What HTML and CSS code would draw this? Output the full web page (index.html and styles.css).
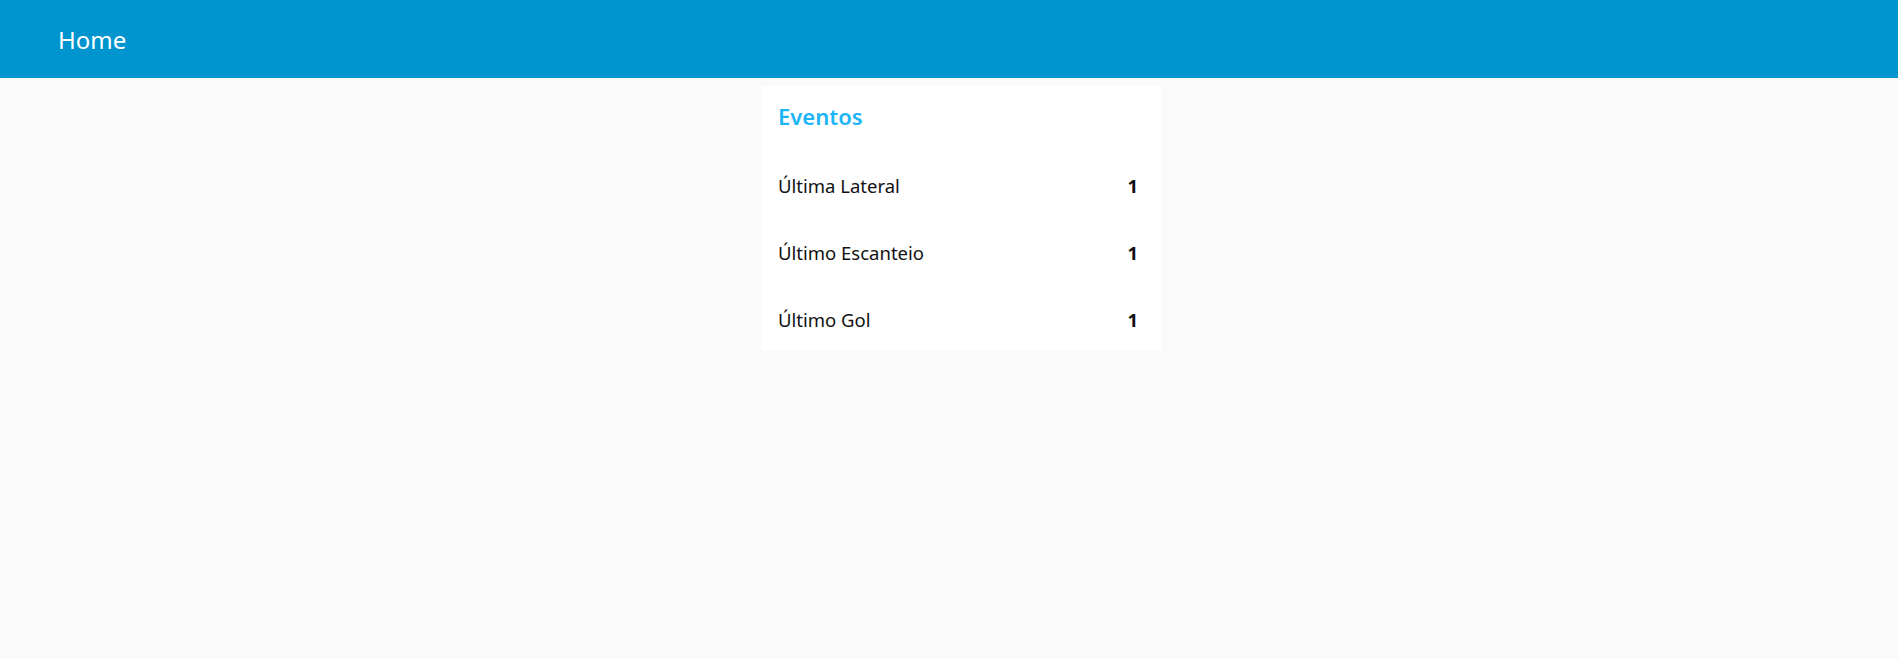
FILE: index.html
```html
<!DOCTYPE html>
<html lang="pt">
<head>
<meta charset="utf-8">
<title>Home</title>
<link rel="stylesheet" href="styles.css">
</head>
<body>
<header class="topbar">
  <h1 class="topbar-title">Home</h1>
</header>
<main class="content">
  <section class="card">
    <h2 class="card-title">Eventos</h2>
    <ul class="event-list">
      <li class="event-row"><span class="event-label">Última Lateral</span><span class="event-value">1</span></li>
      <li class="event-row"><span class="event-label">Último Escanteio</span><span class="event-value">1</span></li>
      <li class="event-row"><span class="event-label">Último Gol</span><span class="event-value">1</span></li>
    </ul>
  </section>
</main>
</body>
</html>
```
FILE: styles.css
```css
html, body {
  margin: 0;
  padding: 0;
  background: #fafafa;
  font-family: "Noto Sans", "Open Sans", sans-serif;
  color: #111;
}
.topbar {
  height: 78px;
  background: #0095ce;
  display: flex;
  align-items: center;
  padding-left: 58px;
}
.topbar-title {
  margin: 0;
  font-size: 24px;
  font-weight: 400;
  color: #fff;
}
.content {
  display: flex;
  justify-content: center;
  padding: 8px 0 0 24px;
}
.card {
  width: 400px;
  background: #fff;
  padding: 0 23px 0 17px;
  box-sizing: border-box;
}
.card-title {
  margin: 0;
  padding-top: 15px;
  height: 53px;
  font-size: 22px;
  font-weight: 600;
  color: #1cb5f7;
}
.event-list {
  list-style: none;
  margin: 0;
  padding: 0;
  display: flex;
  flex-direction: column;
  gap: 5px;
}
.event-row {
  display: flex;
  justify-content: space-between;
  align-items: center;
  height: 62px;
  font-size: 18.5px;
}
.event-value {
  font-weight: 700;
}
```
